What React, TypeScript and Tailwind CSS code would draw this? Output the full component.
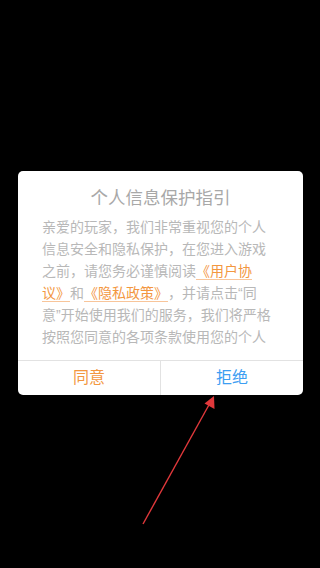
const cjk = { fontFamily: '"Liberation Sans", "Noto Sans CJK SC", sans-serif' };

function Arrow() {
  // red pointer from the bottom of the screen up to the 拒绝 button
  return (
    <svg
      className="pointer-events-none absolute left-0 top-0"
      width={320}
      height={568}
      viewBox="0 0 320 568"
    >
      <line x1={143} y1={524} x2={210} y2={403} stroke="#e0383b" strokeWidth={1.4} />
      <polygon points="214,396 214.5,409 204.5,403.5" fill="#e0383b" />
    </svg>
  );
}

export default function App() {
  return (
    <div lang="zh-CN" className="relative h-[568px] w-[320px] overflow-hidden bg-black" style={cjk}>
      <div className="flex h-full flex-col items-center">
        <div className="mt-[171px] ml-px flex w-[285px] flex-col rounded-[5px] bg-white">
          <div className="pt-[14px] text-center text-[17.5px] leading-[26px] text-[#a8a8a8]">
            个人信息保护指引
          </div>
          <div className="mt-[5px] h-[132px] overflow-hidden break-all pl-6 pr-[29px] text-[14px] leading-[22px] text-[#b8b8b8] [text-spacing-trim:space-all]">
            亲爱的玩家，我们非常重视您的个人信息安全和隐私保护，在您进入游戏之前，请您务必谨慎阅读
            <span className="text-[#f3973f] underline decoration-[#f8c59a] underline-offset-[3px]">《用户协议》</span>
            和
            <span className="text-[#f3973f] underline decoration-[#f8c59a] underline-offset-[3px]">《隐私政策》</span>
            ，并请点击“同意”开始使用我们的服务，我们将严格按照您同意的各项条款使用您的个人信息，为您提供更好的游戏体验。
          </div>
          <div className="mt-3 grid h-[35px] grid-cols-[143px_1fr] border-t border-[#e2e2e2] text-[16px]">
            <button className="border-r border-[#e2e2e2] text-[#f3973f]">同意</button>
            <button className="text-[#3d9ef2]">拒绝</button>
          </div>
        </div>
      </div>
      <Arrow />
    </div>
  );
}
